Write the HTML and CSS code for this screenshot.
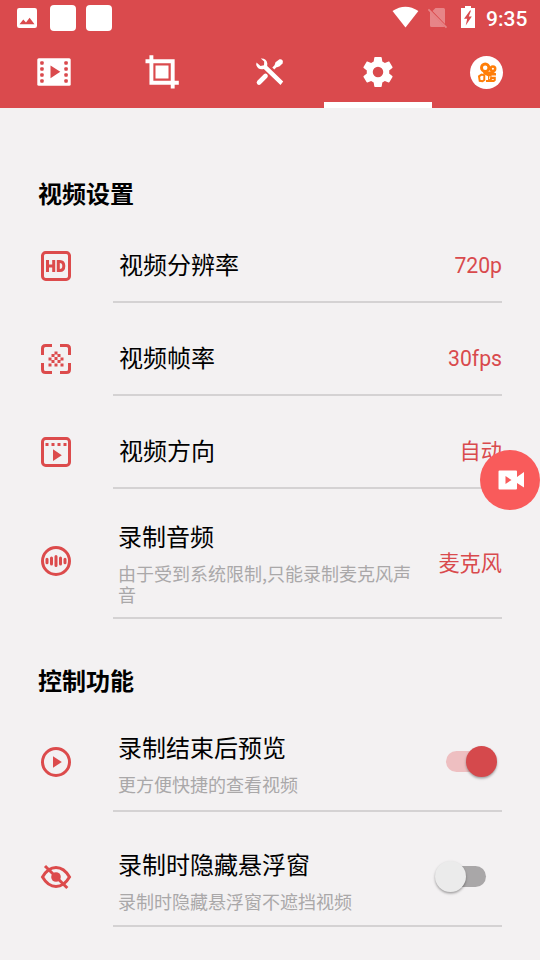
FILE: index.html
```
<!DOCTYPE html>
<html lang="zh-CN">
<head>
<meta charset="utf-8">
<title>视频设置</title>
<link rel="stylesheet" href="styles.css">
</head>
<body>
<header class="header">
  <div class="status">
    <div class="status-left">
      <svg class="pic" width="20" height="20" viewBox="0 0 20 20"><rect width="20" height="20" rx="2.2" fill="#fff"/><path d="M2.500 16.300 6.300 11.400 9 14.500 12.600 9.800 17.500 16.300Z" fill="#da4a4d"/></svg>
      <span class="blank"></span>
      <span class="blank"></span>
    </div>
    <div class="status-right">
      <svg width="148" height="36" viewBox="392 0 148 36">
        <path d="M392.500 11Q405.400 2.500 418.400 11L405.500 27.500Z" fill="#fff"/>
        <path d="M435.500 8H443.500Q445 8 445 9.500V24L432.500 11ZM430 11.500 444.500 26.500 443.500 27H431.500Q430 27 430 25.500Z" fill="#e78588"/>
        <path d="M428.400 9.300 446.500 27.600" stroke="#e78588" stroke-width="1.700"/>
        <path d="M461 8H465V6H471V8H475V28H461Z" fill="#fff"/>
        <path d="M470 10.500 464 18.800H467.200L465.700 25.500 471.800 16.500H468.800L471 10.500Z" fill="#da4a4d"/>
      </svg>
      <span class="clock">9:35</span>
    </div>
  </div>
  <nav class="tabs">
    <a class="tab"><svg width="40" height="40" viewBox="34 52 40 40">
      <rect x="37.300" y="58.300" width="33.400" height="27.500" rx="1.500" fill="#fff"/>
      <g fill="#da4a4d"><rect x="40.200" y="61.200" width="3.500" height="3.500" rx="1"/><rect x="40.200" y="67.200" width="3.500" height="3.500" rx="1"/><rect x="40.200" y="73.200" width="3.500" height="3.500" rx="1"/><rect x="40.200" y="79.200" width="3.500" height="3.500" rx="1"/><rect x="64.300" y="61.200" width="3.500" height="3.500" rx="1"/><rect x="64.300" y="67.200" width="3.500" height="3.500" rx="1"/><rect x="64.300" y="73.200" width="3.500" height="3.500" rx="1"/><rect x="64.300" y="79.200" width="3.500" height="3.500" rx="1"/><path d="M50.500 65.500 60.300 71.800 50.500 78.300Z"/></g>
    </svg></a>
    <a class="tab"><svg width="40" height="40" viewBox="142 52 40 40">
      <path d="M145.500 61.200H172.700V88.500M151.400 55.300V82.700H178.800" fill="none" stroke="#fff" stroke-width="3.900"/>
      <rect x="155.500" y="65.500" width="13" height="13" fill="#fff"/>
    </svg></a>
    <a class="tab"><svg width="40" height="40" viewBox="250 52 40 40">
      <path d="M259 82.500 265.500 76" stroke="#fff" stroke-width="4.600" stroke-linecap="round"/>
      <path d="M273.300 68.500 276.500 65.300" stroke="#fff" stroke-width="2.800"/>
      <path d="M274.900 64.200 275.500 62.200 279.500 59.300Q281.200 58.800 282.500 60.200 283.400 61.500 282.500 63.500L279.700 66.300 277 67.200Q274.500 66.800 274.900 64.200Z" fill="#fff"/>
      <path d="M260.800 58.500Q266.600 58.200 267.300 63.500L267.200 66 283.200 81.600 280.500 85 263.800 69Q258 70.300 256.200 65L256.500 62.500 260.500 66 264 65.200 264.200 61.500Z" fill="#fff"/>
    </svg></a>
    <a class="tab active"><svg width="36" height="36" viewBox="0 0 24 24"><path fill="#fff" d="M19.430 12.980c.04-.32.07-.64.07-.98s-.03-.66-.07-.98l2.110-1.650c.19-.15.24-.42.12-.64l-2-3.460c-.12-.22-.39-.3-.61-.22l-2.490 1c-.52-.4-1.080-.73-1.690-.98l-.38-2.650C14.460 2.180 14.250 2 14 2h-4c-.25 0-.46.18-.49.42l-.38 2.650c-.61.25-1.170.59-1.690.98l-2.490-1c-.23-.09-.49 0-.61.22l-2 3.460c-.13.22-.07.49.12.64l2.110 1.650c-.04.32-.07.65-.07.98s.03.66.07.98l-2.110 1.650c-.19.15-.24.42-.12.64l2 3.460c.12.22.39.3.61.22l2.490-1c.52.4 1.080.73 1.690.98l.38 2.650c.03.24.24.42.49.42h4c.25 0 .46-.18.49-.42l.38-2.650c.61-.25 1.170-.59 1.690-.98l2.490 1c.23.09.49 0 .61-.22l2-3.460c.12-.22.07-.49-.12-.64zM12 15.500a3.500 3.500 0 1 1 0-7 3.500 3.500 0 0 1 0 7z"/></svg></a>
    <a class="tab"><svg width="40" height="40" viewBox="466 52 40 40">
      <circle cx="486.500" cy="72.500" r="16.500" fill="#fff"/>
      <g fill="none" stroke="#ff7e08"><circle cx="485.200" cy="67.700" r="3.700" stroke-width="2.900"/><circle cx="492.900" cy="68.700" r="2.300" stroke-width="2.500"/><path d="M479 76.300 481.500 74.600 484.300 75.200V80L482.500 81.300 479.700 80.800Z" stroke-width="2"/></g>
      <path d="M483 71.500H492.500L496 73.200V75.500H491.500V76.700H495.800V80.500L494 82H486V80H488V76.300L483.500 74Z" fill="#ff7e08"/><path d="M490 76 489.300 79.200M491.800 79.500H493.800" stroke="#fff" stroke-width=".8"/>
    </svg></a>
  </nav>
</header>

<main>
  <h2 class="section first">视频设置</h2>

  <div class="row">
    <svg class="icon" viewBox="0 0 36 36"><rect x="4.500" y="4.500" width="27" height="27" rx="3.200" class="line"/><path d="M9.500 12V24M15.700 12V24M9.500 18H15.700M20.300 13.500V22.500H21.800Q25.800 22.500 25.800 18T21.800 13.500Z" class="line"/></svg>
    <div class="body"><div class="label">视频分辨率</div><div class="value">720p</div></div>
  </div>

  <div class="row">
    <svg class="icon" viewBox="0 0 36 36"><path d="M14 4.500H7.500Q4.500 4.500 4.500 7.500V14M22 4.500H28.500Q31.500 4.500 31.500 7.500V14M14 31.500H7.500Q4.500 31.500 4.500 28.500V22M22 31.500H28.500Q31.500 31.500 31.500 28.500V22" class="line"/>
      <path class="fill" d="M16.500 10.500h3v3h-3zM13.500 13h3v3h-3zM19.500 13h3v3h-3zM10.500 16.500h3v3h-3zM16.500 16h3v3h-3zM22.500 16.500h3v3h-3zM13.500 19h3v3h-3zM19.500 19h3v3h-3zM10.500 22.500h3v3h-3zM16.500 22.500h3v3h-3zM22.500 22.500h3v3h-3z"/></svg>
    <div class="body"><div class="label">视频帧率</div><div class="value">30fps</div></div>
  </div>

  <div class="row">
    <svg class="icon" viewBox="0 0 36 36"><rect x="4.500" y="4.500" width="27" height="27" rx="3.200" class="line"/><path class="fill" d="M7.500 9h3v3h-3zM13.500 9h3v3h-3zM19.500 9h3v3h-3zM25.500 9h3v3h-3zM15 15.300 23.800 21.200 15 27Z"/></svg>
    <div class="body"><div class="label">视频方向</div><div class="value">自动</div></div>
  </div>

  <div class="row audio">
    <svg class="icon" viewBox="0 0 36 36"><circle cx="18" cy="18" r="13.500" class="line"/><path class="bars" d="M9 16.200V19.800M13.500 15V21M18 13.500V22.500M22.500 15V21M27 16.200V19.800"/></svg>
    <div class="body"><div class="text"><div class="label">录制音频</div><div class="sub">由于受到系统限制,只能录制麦克风声音</div></div><div class="value">麦克风</div></div>
  </div>

  <h2 class="section">控制功能</h2>

  <div class="row toggle">
    <svg class="icon" viewBox="0 0 36 36"><circle cx="18" cy="18" r="13.500" class="line"/><path class="fill" d="M15 12.300 23.800 18 15 23.800Z"/></svg>
    <div class="body"><div class="text"><div class="label">录制结束后预览</div><div class="sub">更方便快捷的查看视频</div></div><div class="switch on"><span class="thumb"></span></div></div>
  </div>

  <div class="row toggle last">
    <svg class="icon" viewBox="0 0 36 36"><path d="M4.500 18Q10 8.500 18 8.500T31.500 18Q26 27.500 18 27.500T4.500 18Z" class="line"/><circle cx="18" cy="18" r="4.800" class="fill"/><path d="M7 7 29.300 29" class="line"/></svg>
    <div class="body"><div class="text"><div class="label">录制时隐藏悬浮窗</div><div class="sub">录制时隐藏悬浮窗不遮挡视频</div></div><div class="switch off"><span class="thumb"></span></div></div>
  </div>
</main>

<div class="fab"><svg width="60" height="60" viewBox="0 0 60 60"><path fill="#fff" d="M19.500 20.500H36Q37 20.500 37 21.500V27L44 22V37.500L37 33V38.500Q37 39.500 36 39.500H19.500Q18.500 39.500 18.500 38.500V21.500Q18.500 20.500 19.500 20.500Z"/><path d="M25.500 26 31.500 30 25.500 34Z" fill="#f95b5b"/></svg></div>
</body>
</html>
```
FILE: styles.css
```
* { box-sizing: border-box; }
body {
  margin: 0;
  width: 540px;
  height: 960px;
  overflow: hidden;
  position: relative;
  background: #f3f1f2;
  color: #000;
  font-family: Roboto, "Noto Sans CJK SC", sans-serif;
}
svg { display: block; }

.header { height: 108px; background: #da4a4d; }
.status { height: 36px; display: flex; justify-content: space-between; }
.status-left { display: flex; align-items: center; gap: 10px; padding-left: 17px; }
.pic { margin-right: 3px; }
.blank { width: 26px; height: 26px; border-radius: 4px; background: #fff; }
.status-right { display: flex; width: 148px; }
.status-right svg { flex: none; margin-right: -54px; }
.clock { color: #fff; font-size: 21px; font-weight: 500; line-height: 38px; }
.tabs { display: grid; grid-template-columns: repeat(5, 1fr); height: 72px; }
.tab { display: flex; align-items: center; justify-content: center; }
.tab.active { border-bottom: 6px solid #fff; padding-top: 6px; }

.section { margin: 0; height: 78px; padding: 47px 0 0 38px; font-size: 24px; line-height: 32px; font-weight: 700; }
.section.first { height: 102px; padding-top: 71px; }

.row { display: flex; height: 93px; padding: 0 38px; }
.icon { flex: none; width: 36px; height: 36px; margin: 38px 39px 0 0; }
.line { fill: none; stroke: #dc4b4c; stroke-width: 3; }
.fill { fill: #dc4b4c; }
.bars { fill: none; stroke: #dc4b4c; stroke-width: 3; stroke-linecap: round; }
.body {
  flex: 1;
  display: flex;
  align-items: center;
  justify-content: space-between;
  padding: 19px 0 0 6px;
  border-bottom: 2px solid #d4d2d3;
}
.label { padding-top: 2px; font-size: 24px; line-height: 30px; }
.value { padding-top: 2px; color: #d94a4d; font-size: 21.2px; line-height: 30px; }
.text { width: 300px; }
.text .label { padding-top: 0; }
.sub { margin: 10px 0 1px; color: #aaa8a9; font-family: "Noto Sans CJK SC", sans-serif; font-size: 18px; line-height: 21px; }

.audio { height: 130px; }
.audio .icon { margin-top: 54px; }
.audio .body { padding: 20px 0 0 5px; }
.audio .text { padding-top: 2px; }
.audio .value { white-space: nowrap; }

.toggle { height: 115px; }
.toggle .icon { margin-top: 47px; }
.toggle .body { padding: 22px 0 0 5px; }
.last .text { padding-top: 4px; }

.switch { width: 40px; height: 21px; border-radius: 11px; display: flex; align-items: center; margin: -6px 16px 0 0; }
.switch.on { background: #eebfc1; }
.switch.off { background: #a9a7a8; }
.thumb { flex: none; width: 31px; height: 31px; border-radius: 50%; box-shadow: 0 1.500px 2.500px rgba(0, 0, 0, 0.35); }
.on .thumb { background: #d5494c; margin-left: 20px; }
.off .thumb { background: #ebebeb; margin-left: -11px; }

.fab { position: absolute; left: 480px; top: 450px; width: 60px; height: 60px; border-radius: 50%; background: #f95b5b; }
```
